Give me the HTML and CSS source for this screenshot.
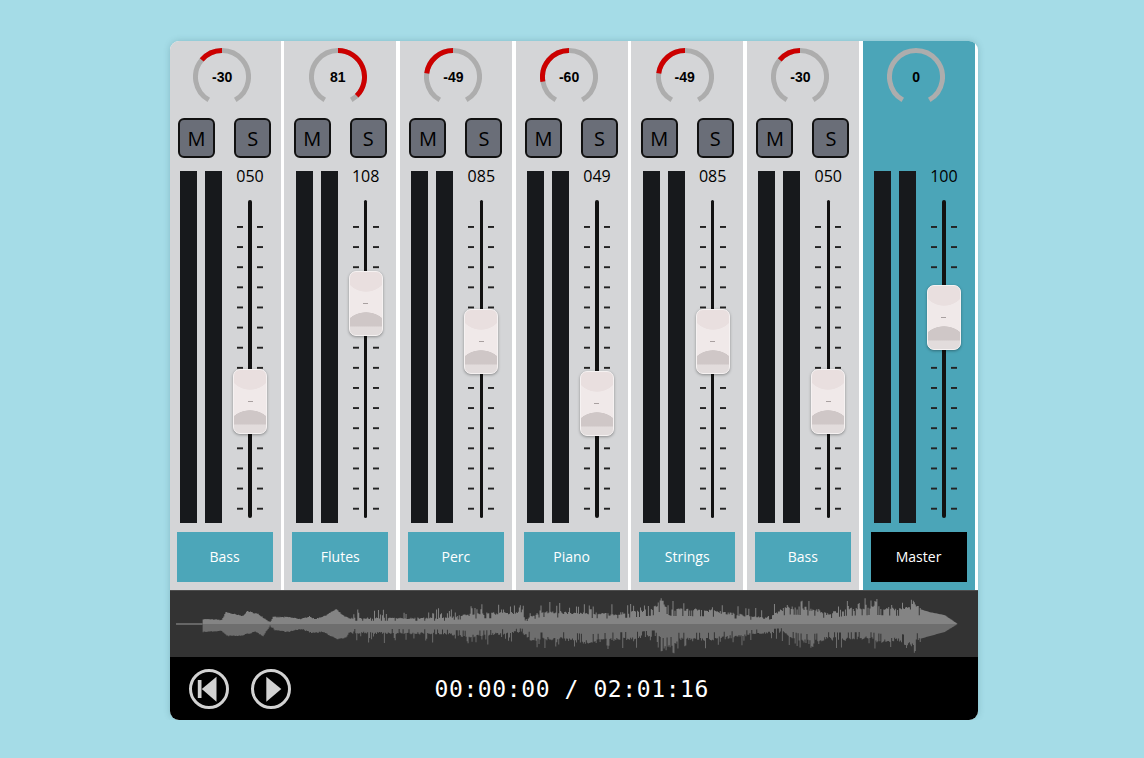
FILE: index.html
```html
<!DOCTYPE html>
<html>
<head>
   <title>Mixer</title>
   <meta name="viewport" content="width=device-width, initial-scale=1">
   <link rel="stylesheet" href="styles.css">
</head>
<body>
   <div class="panel">
      <div class="mixer">

         <div class="channel">
            <div class="knob">
               <svg viewBox="0 0 58 58" width="58" height="58">
                  <path class="arc" d="M15.75 51.95A26.5 26.5 0 1 1 42.25 51.95"/>
                  <path class="arc-on" d="M8.7 11.97A26.5 26.5 0 0 1 29 2.5"/>
               </svg>
               <span>-30</span>
            </div>
            <div class="btns"><button class="btn">M</button><button class="btn">S</button></div>
            <div class="strip">
               <div class="meter"></div><div class="meter"></div>
               <div class="fader-col">
                  <div class="value">050</div>
                  <div class="fader"><div class="scale"></div><div class="thumb" style="top: 169px"></div></div>
               </div>
            </div>
            <div class="label">Bass</div>
         </div>

         <div class="channel">
            <div class="knob">
               <svg viewBox="0 0 58 58" width="58" height="58">
                  <path class="arc" d="M15.75 51.95A26.5 26.5 0 1 1 42.25 51.95"/>
                  <path class="arc-on" d="M29 2.5A26.5 26.5 0 0 1 47.74 47.74"/>
               </svg>
               <span>81</span>
            </div>
            <div class="btns"><button class="btn">M</button><button class="btn">S</button></div>
            <div class="strip">
               <div class="meter"></div><div class="meter"></div>
               <div class="fader-col">
                  <div class="value">108</div>
                  <div class="fader"><div class="scale"></div><div class="thumb" style="top: 71px"></div></div>
               </div>
            </div>
            <div class="label">Flutes</div>
         </div>

         <div class="channel">
            <div class="knob">
               <svg viewBox="0 0 58 58" width="58" height="58">
                  <path class="arc" d="M15.75 51.95A26.5 26.5 0 1 1 42.25 51.95"/>
                  <path class="arc-on" d="M2.76 25.31A26.5 26.5 0 0 1 29 2.5"/>
               </svg>
               <span>-49</span>
            </div>
            <div class="btns"><button class="btn">M</button><button class="btn">S</button></div>
            <div class="strip">
               <div class="meter"></div><div class="meter"></div>
               <div class="fader-col">
                  <div class="value">085</div>
                  <div class="fader"><div class="scale"></div><div class="thumb" style="top: 109px"></div></div>
               </div>
            </div>
            <div class="label">Perc</div>
         </div>

         <div class="channel">
            <div class="knob">
               <svg viewBox="0 0 58 58" width="58" height="58">
                  <path class="arc" d="M15.75 51.95A26.5 26.5 0 1 1 42.25 51.95"/>
                  <path class="arc-on" d="M2.9 33.6A26.5 26.5 0 0 1 29 2.5"/>
               </svg>
               <span>-60</span>
            </div>
            <div class="btns"><button class="btn">M</button><button class="btn">S</button></div>
            <div class="strip">
               <div class="meter"></div><div class="meter"></div>
               <div class="fader-col">
                  <div class="value">049</div>
                  <div class="fader"><div class="scale"></div><div class="thumb" style="top: 171px"></div></div>
               </div>
            </div>
            <div class="label">Piano</div>
         </div>

         <div class="channel">
            <div class="knob">
               <svg viewBox="0 0 58 58" width="58" height="58">
                  <path class="arc" d="M15.75 51.95A26.5 26.5 0 1 1 42.25 51.95"/>
                  <path class="arc-on" d="M2.76 25.31A26.5 26.5 0 0 1 29 2.5"/>
               </svg>
               <span>-49</span>
            </div>
            <div class="btns"><button class="btn">M</button><button class="btn">S</button></div>
            <div class="strip">
               <div class="meter"></div><div class="meter"></div>
               <div class="fader-col">
                  <div class="value">085</div>
                  <div class="fader"><div class="scale"></div><div class="thumb" style="top: 109px"></div></div>
               </div>
            </div>
            <div class="label">Strings</div>
         </div>

         <div class="channel">
            <div class="knob">
               <svg viewBox="0 0 58 58" width="58" height="58">
                  <path class="arc" d="M15.75 51.95A26.5 26.5 0 1 1 42.25 51.95"/>
                  <path class="arc-on" d="M8.7 11.97A26.5 26.5 0 0 1 29 2.5"/>
               </svg>
               <span>-30</span>
            </div>
            <div class="btns"><button class="btn">M</button><button class="btn">S</button></div>
            <div class="strip">
               <div class="meter"></div><div class="meter"></div>
               <div class="fader-col">
                  <div class="value">050</div>
                  <div class="fader"><div class="scale"></div><div class="thumb" style="top: 169px"></div></div>
               </div>
            </div>
            <div class="label">Bass</div>
         </div>

         <!-- Master has no mute / solo -->
         <div class="channel master">
            <div class="knob">
               <svg viewBox="0 0 58 58" width="58" height="58">
                  <path class="arc" d="M15.75 51.95A26.5 26.5 0 1 1 42.25 51.95"/>
               </svg>
               <span>0</span>
            </div>
            <div class="btns"></div>
            <div class="strip">
               <div class="meter"></div><div class="meter"></div>
               <div class="fader-col">
                  <div class="value">100</div>
                  <div class="fader"><div class="scale"></div><div class="thumb" style="top: 85px"></div></div>
               </div>
            </div>
            <div class="label">Master</div>
         </div>

      </div>

      <div class="wave">
         <svg id="waveform" viewBox="0 0 808 67" width="808" height="66"></svg>
      </div>

      <div class="transport">
         <svg class="icon" viewBox="0 0 44 44" width="44" height="44">
            <circle cx="22" cy="22" r="18.5"/>
            <rect x="10.8" y="13" width="3.7" height="18"/>
            <polygon points="29.5,9.7 14.8,22 29.5,34.7"/>
         </svg>
         <svg class="icon" viewBox="0 0 44 44" width="44" height="44">
            <circle cx="22" cy="22" r="18.5"/>
            <polygon points="17.3,9.7 32.3,22 17.3,34.7"/>
         </svg>
         <div class="time">00:00:00 / 02:01:16</div>
      </div>
   </div>

   <script src="waveform.js"></script>
</body>
</html>
```

FILE: styles.css
```css
body {
   margin: 0;
   padding: 41px 0 0 170px;
   background-color: #a5dce7;
   font-family: "Open Sans", Arial, sans-serif;
}
.panel {
   width: 808px;
   height: 679px;
   background: #fff;
   border-radius: 9px;
   overflow: hidden;
   box-shadow: 0 0 6px rgba(40, 90, 100, 0.25);
}
.mixer {
   display: flex;
   gap: 3.67px;
   height: 549px;
   margin-left: -1.4px;
}
.channel {
   flex: none;
   width: 112px;
   padding-top: 7px;
   box-sizing: border-box;
   background: #d4d5d7;
}
.channel.master {
   background: #4ba5b8;
}
.knob {
   display: grid;
   width: 58px;
   height: 58px;
   margin-left: 24.5px;
   place-items: center;
}
.knob svg,
.knob span {
   grid-area: 1 / 1;
}
.knob span {
   font-family: "Liberation Sans", Arial, sans-serif;
   font-size: 14px;
   font-weight: bold;
   color: #000;
}
.arc,
.arc-on {
   fill: none;
   stroke-width: 5;
}
.arc {
   stroke: #adadad;
}
.arc-on {
   stroke: #cc0000;
}
.btns {
   display: flex;
   justify-content: space-between;
   height: 40px;
   margin: 12px 9.5px 0;
}
.btn {
   width: 37px;
   height: 40px;
   padding: 0;
   background: #6a6e78;
   border: 2px solid #111;
   border-radius: 6px;
   color: #000;
   font-family: inherit;
   font-size: 20px;
}
.strip {
   display: flex;
   height: 352px;
   margin-top: 13px;
   padding-left: 11.4px;
}
.meter {
   width: 17px;
   margin-right: 8px;
   background: #17191c;
}
.fader-col {
   width: 40px;
   margin-left: 0;
}
.value {
   height: 29px;
   color: #000;
   font-size: 16px;
   line-height: 11px;
   text-align: center;
}
.fader {
   position: relative;
   width: 40px;
   height: 318px;
}
/* track */
.fader::before {
   content: "";
   position: absolute;
   left: 18.4px;
   top: 0;
   bottom: 0;
   width: 3.4px;
   border-radius: 2px;
   background: #111;
}
/* tick marks */
.scale {
   width: 26px;
   height: 284px;
   margin-left: 7px;
   position: relative;
   top: 26px;
   background-image: linear-gradient(#222 2px, transparent 2px), linear-gradient(#222 2px, transparent 2px);
   background-size: 6px 20.14px;
   background-position: 0 0, 20px 0;
   background-repeat: repeat-y;
}
.thumb {
   position: absolute;
   left: 3px;
   width: 34px;
   height: 65px;
   box-sizing: border-box;
   border: 1px solid #f6f2f2;
   border-radius: 7px;
   box-shadow: 0 1px 3px rgba(0, 0, 0, 0.35);
   background:
      linear-gradient(#a8a0a0, #a8a0a0) 50% 50% / 5px 1px no-repeat,
      radial-gradient(ellipse 22px 21px at 50% -1px, #e9dfdf 97%, rgba(233, 223, 223, 0)) no-repeat,
      linear-gradient(to bottom, rgba(0, 0, 0, 0) 54px, #e2dcdc 55px),
      radial-gradient(ellipse 22px 18px at 50% 58px, #cfc7c7 97%, rgba(207, 199, 199, 0)) no-repeat,
      #f0e9e9;
}
.label {
   height: 50px;
   margin: 9px 8px 0;
   background: #4ca6b9;
   color: #fff;
   font-size: 14px;
   line-height: 50px;
   text-align: center;
}
.master .label {
   background: #000;
}
.wave {
   height: 66px;
   border-top: 1px solid #4d4d4d;
   background: #333;
}
.wave svg {
   display: block;
}
.transport {
   display: flex;
   align-items: center;
   gap: 18px;
   height: 63px;
   padding-left: 16.5px;
   background: #000;
}
.icon {
   flex: none;
}
.icon circle {
   fill: none;
   stroke: #d2d2d2;
   stroke-width: 3;
}
.icon rect,
.icon polygon {
   fill: #d2d2d2;
}
.time {
   margin-left: 124px;
   color: #fff;
   font-family: "DejaVu Sans Mono", "Liberation Mono", monospace;
   font-size: 23px;
   letter-spacing: 0.6px;
   white-space: nowrap;
}
```

FILE: waveform.js
```js
// Envelope of the clip: [x, height above / below the centre line]
const topEnv = [[27,5],[46,4],[50,12],[67,8],[72,13],[83,10],[95,2],[98,7],[113,7],[127,5],[135,8],[140,5],[150,8],[162,15],[170,8],[175,6],
   [270,6],[300,10],[350,12],[355,5],[370,13],[390,12],[420,11],[440,10],[470,13],[484,16],[492,24],[502,15],[540,14],[598,6],[620,18],[650,15],[660,10],[680,15],[710,17],[730,15],[745,16],[746,24],[755,15],[765,12],[780,9],[793,0]];
const botEnv = [[27,8],[46,7],[51,12],[65,12],[72,10],[80,8],[88,12],[95,2],[100,6],[113,8],[127,5],[137,9],[148,8],[163,15],[172,14],[175,9],
   [270,10],[300,13],[350,8],[360,16],[390,15],[420,19],[440,16],[470,14],[485,12],[492,26],[502,24],[510,16],[540,16],[600,9],[615,8],[630,17],[645,19],[660,15],[680,16],[700,14],[715,18],[730,16],[745,22],[755,15],[780,8],[793,0]];

let seed = 7;
function rnd() {
   seed = (seed * 16807) % 2147483647;
   return seed / 2147483647;
}

function envAt(env, x) {
   for (let i = 1; i < env.length; i++) {
      if (x <= env[i][0]) {
         const a = env[i - 1], b = env[i];
         return a[1] + (b[1] - a[1]) * (x - a[0]) / (b[0] - a[0]);
      }
   }
   return 0;
}

function sample(env, x) {
   let h = envAt(env, x);
   if (x < 175 || x > 755) return h + (x < 755 ? rnd() - 0.5 : 0);
   const r = rnd();
   if (r < 0.13) return h + 3 + rnd() * 7;   // spike
   if (r < 0.28) return h * 0.55;            // dip
   return h * (0.85 + rnd() * 0.25);
}

const mid = 33.5;
let upper = "M27 " + mid, lower = "M27 " + mid;
for (let x = 27; x < 793; x++) {
   const t = Math.max(0, sample(topEnv, x)).toFixed(1);
   const b = Math.max(0, sample(botEnv, x)).toFixed(1);
   upper += "L" + x + " " + (mid - t).toFixed(1) + "L" + (x + 1) + " " + (mid - t).toFixed(1);
   lower += "L" + x + " " + (mid + +b).toFixed(1) + "L" + (x + 1) + " " + (mid + +b).toFixed(1);
}
upper += "L793 " + mid + "Z";
lower += "L793 " + mid + "Z";

const svg = document.getElementById("waveform");
function addPath(d, fill) {
   const p = document.createElementNS("http://www.w3.org/2000/svg", "path");
   p.setAttribute("d", d);
   p.setAttribute("fill", fill);
   svg.appendChild(p);
}
addPath("M0 32.5H27V34.5H0Z", "#666");
addPath(upper, "#848484");
addPath(lower, "#6e6e6e");
```
